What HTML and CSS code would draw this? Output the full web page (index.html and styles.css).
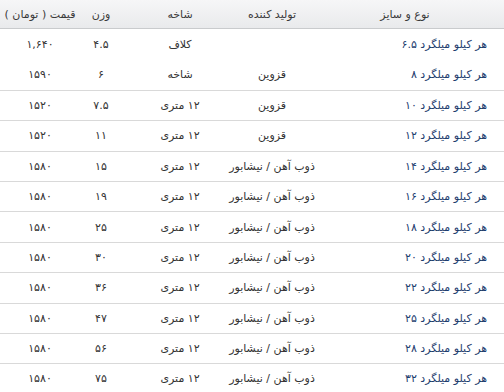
FILE: index.html
```html
<!DOCTYPE html>
<html lang="fa" dir="rtl">
<head>
<meta charset="utf-8">
<link rel="stylesheet" href="styles.css">
</head>
<body>
<div class="table">
  <div class="row head">
    <div class="c">نوع و سایز</div>
    <div class="c">تولید کننده</div>
    <div class="c">شاخه</div>
    <div class="c">وزن</div>
    <div class="c">قیمت ( تومان )</div>
  </div>
  <div class="row nol"><div class="c name">هر کیلو میلگرد ۶.۵</div><div class="c"></div><div class="c">کلاف</div><div class="c">۴.۵</div><div class="c">۱,۶۴۰</div></div>
  <div class="row nol"><div class="c name">هر کیلو میلگرد ۸</div><div class="c">قزوین</div><div class="c">شاخه</div><div class="c">۶</div><div class="c">۱۵۹۰</div></div>
  <div class="row"><div class="c name">هر کیلو میلگرد ۱۰</div><div class="c">قزوین</div><div class="c">۱۲ متری</div><div class="c">۷.۵</div><div class="c">۱۵۲۰</div></div>
  <div class="row"><div class="c name">هر کیلو میلگرد ۱۲</div><div class="c">قزوین</div><div class="c">۱۲ متری</div><div class="c">۱۱</div><div class="c">۱۵۲۰</div></div>
  <div class="row"><div class="c name">هر کیلو میلگرد ۱۴</div><div class="c">ذوب آهن / نیشابور</div><div class="c">۱۲ متری</div><div class="c">۱۵</div><div class="c">۱۵۸۰</div></div>
  <div class="row"><div class="c name">هر کیلو میلگرد ۱۶</div><div class="c">ذوب آهن / نیشابور</div><div class="c">۱۲ متری</div><div class="c">۱۹</div><div class="c">۱۵۸۰</div></div>
  <div class="row"><div class="c name">هر کیلو میلگرد ۱۸</div><div class="c">ذوب آهن / نیشابور</div><div class="c">۱۲ متری</div><div class="c">۲۵</div><div class="c">۱۵۸۰</div></div>
  <div class="row"><div class="c name">هر کیلو میلگرد ۲۰</div><div class="c">ذوب آهن / نیشابور</div><div class="c">۱۲ متری</div><div class="c">۳۰</div><div class="c">۱۵۸۰</div></div>
  <div class="row"><div class="c name">هر کیلو میلگرد ۲۲</div><div class="c">ذوب آهن / نیشابور</div><div class="c">۱۲ متری</div><div class="c">۳۶</div><div class="c">۱۵۸۰</div></div>
  <div class="row"><div class="c name">هر کیلو میلگرد ۲۵</div><div class="c">ذوب آهن / نیشابور</div><div class="c">۱۲ متری</div><div class="c">۴۷</div><div class="c">۱۵۸۰</div></div>
  <div class="row"><div class="c name">هر کیلو میلگرد ۲۸</div><div class="c">ذوب آهن / نیشابور</div><div class="c">۱۲ متری</div><div class="c">۵۶</div><div class="c">۱۵۸۰</div></div>
  <div class="row"><div class="c name">هر کیلو میلگرد ۳۲</div><div class="c">ذوب آهن / نیشابور</div><div class="c">۱۲ متری</div><div class="c">۷۵</div><div class="c">۱۵۸۰</div></div>
</div>
</body>
</html>
```
FILE: styles.css
```css
html, body {
  margin: 0;
  padding: 0;
  background: #ffffff;
}
body {
  direction: rtl;
  font-family: "DejaVu Sans", sans-serif;
  font-size: 11px;
  color: #333333;
  overflow: hidden;
}
.table {
  width: 504px;
}
.row {
  display: grid;
  grid-template-columns: 198px 68px 116px 42px 80px;
  height: 30.4px;
  border-top: 1px solid #d9d9d9;
  box-sizing: border-box;
}
.row.head {
  height: 29px;
  border-top: none;
  border-bottom: 1px solid #c9cbcd;
  background: linear-gradient(#f6f6f7, #e9eaec);
  color: #3a3a3a;
}
.row.nol {
  border-top: none;
}
.c {
  display: flex;
  align-items: center;
  justify-content: center;
  white-space: nowrap;
  min-width: 0;
}
.c.name {
  justify-content: flex-start;
  padding-right: 17px;
  color: #1d3d6e;
}
```
